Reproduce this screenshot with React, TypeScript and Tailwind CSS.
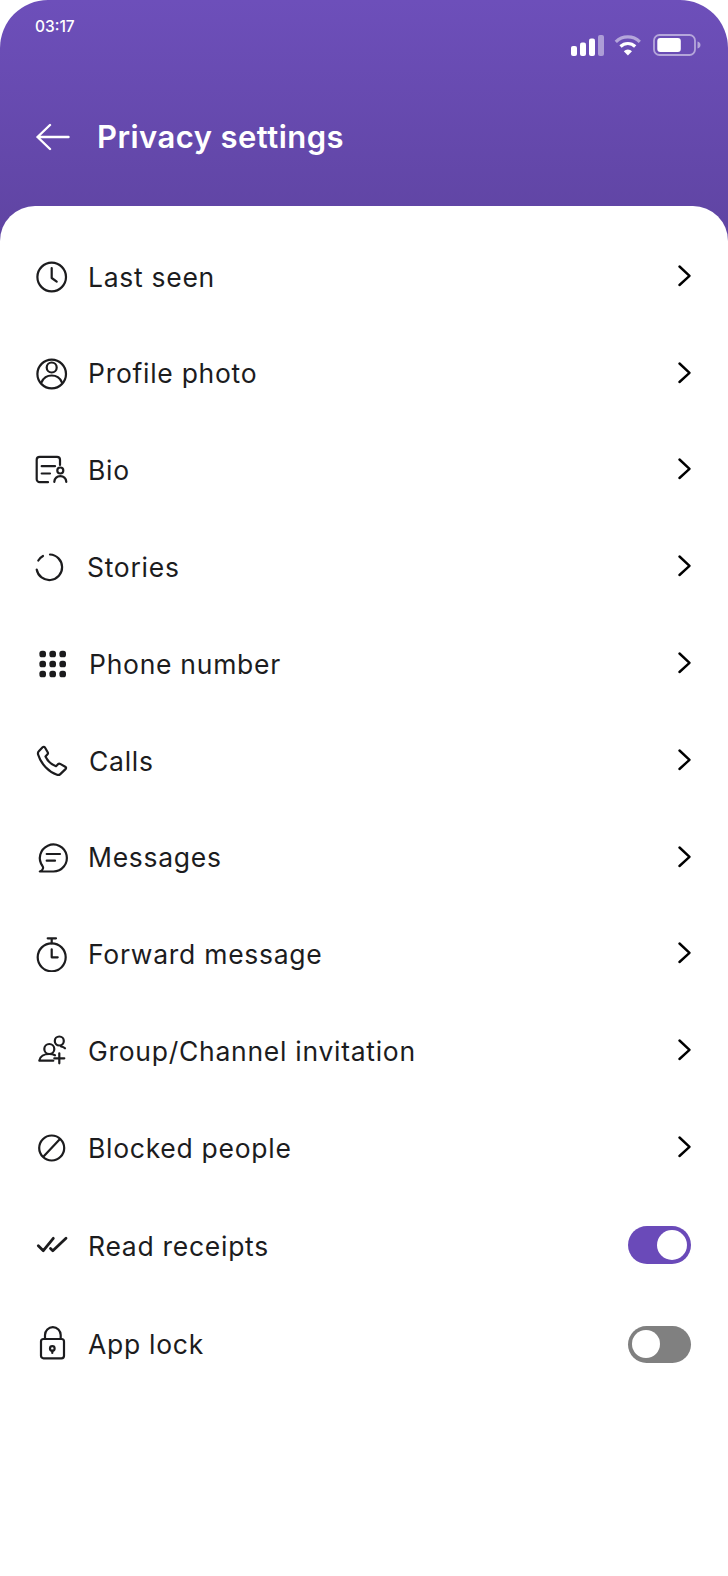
import React from "react";

const Svg = ({ children, className = "" }: { children: React.ReactNode; className?: string }) => (
  <svg width="36" height="36" viewBox="0 0 36 36" fill="none" stroke="#1c1c1e" strokeWidth="2.200" strokeLinecap="round" strokeLinejoin="round" className={"shrink-0 " + className}>
    {children}
  </svg>
);

const icons: Record<string, React.ReactNode> = {
  clock: (
    <Svg>
      <circle cx="17.7" cy="18" r="14.3" />
      <path d="M17.7 9v10l5 3.7" />
    </Svg>
  ),
  profile: (
    <Svg>
      <circle cx="17.7" cy="18" r="14.3" />
      <circle cx="17.7" cy="11.5" r="5" />
      <path d="M7.700 26c2-4.600 5.800-6.500 10-6.500s8 1.900 10 6.500" />
    </Svg>
  ),
  bio: (
    <Svg>
      <path d="M26 13V7.800a3 3 0 0 0-3-3H5.700a3 3 0 0 0-3 3v19.400a3 3 0 0 0 3 3H14" />
      <path d="M7.700 14.200H21M7.700 21.500H16" />
      <circle cx="26.300" cy="18.500" r="3" />
      <path d="M20.300 29.800c.5-3.600 3-5.600 6-5.600s5.500 2 6 5.600" />
    </Svg>
  ),
  stories: (
    <Svg>
      <path d="M16 5.500A12.800 12.800 0 1 1 2.700 20.500" />
      <path d="M4.300 11.500A12.800 12.800 0 0 1 9 7" />
    </Svg>
  ),
  dial: (
    <Svg>
      {[8.7, 18.7, 28.7].flatMap((x) =>
        [8, 18, 28].map((y) => <rect key={`${x}-${y}`} x={x - 3.3} y={y - 3.3} width="6.600" height="6.600" rx="2.600" fill="#1c1c1e" stroke="none" />)
      )}
    </Svg>
  ),
  phone: (
    <Svg>
      <path d="M8.600 4.300 4.800 8.300c-1 1-1.100 2-.6 3.500C7 21 15 29 23 31.800c1.500.4 2.500.1 3.300-.7l5.200-5c.9-.9.700-1.800-.3-2.400l-5-2.800c-.8-.4-1.500-.3-2.200.3l-2 2C17.500 21.500 13.500 18 11.500 13.500l2-2.200c.6-.6.600-1.300.2-2l-2.900-5c-.4-.6-1.600-.6-2.200 0z" />
    </Svg>
  ),
  message: (
    <Svg>
      <path d="M19.300 31.500A13.500 13.500 0 1 0 8.500 26c.7.800.8 1.500.5 2.500-.4 1.300-1.500 2.500-3.200 3h13.500z" />
      <path d="M12.700 14H26M12.700 20.700H21" />
    </Svg>
  ),
  timer: (
    <Svg>
      <circle cx="17.7" cy="21.300" r="14" />
      <path d="M13.700 2.300H22M17.700 2.300v5M17.700 13.300v8h6" />
    </Svg>
  ),
  group: (
    <Svg>
      <circle cx="15.300" cy="16" r="5" />
      <circle cx="25.300" cy="8" r="4.500" />
      <path d="M5.300 27.700c.6-4.500 5-6.700 10-6.700 2 0 4 .4 5.700 1.300M5.300 27.700h14" />
      <path d="M25.300 20.300v10M20.300 25.300h10" />
      <path d="M27 13.500c1.500.2 3 .8 4 1.800" />
    </Svg>
  ),
  blocked: (
    <Svg>
      <circle cx="17.700" cy="18" r="12.500" />
      <path d="M10 26 26 9" />
    </Svg>
  ),
  checks: (
    <Svg>
      <path d="m4.300 17.700 5 5 10-12.400M16.500 20.500l2.300 2.200L32 10.300" strokeWidth="2.800" />
    </Svg>
  ),
  lock: (
    <Svg>
      <rect x="7" y="13" width="23" height="19.300" rx="2.500" />
      <path d="M11 13V9a7.800 7.800 0 0 1 15.700 0v4" />
      <circle cx="18.300" cy="22.500" r="2.300" />
      <path d="M18.300 24.500v2.500" />
    </Svg>
  ),
};

const Chevron = () => (
  <svg width="13" height="22" viewBox="0 0 13 22" fill="none" stroke="#000" strokeWidth="2.400" strokeLinecap="round" strokeLinejoin="round" className="-mt-[2px]">
    <path d="M1.500 1.500 11.500 10.800 1.500 20" />
  </svg>
);

const rows: { icon: string; label: string; textClass?: string }[] = [
  { icon: "clock", label: "Last seen" },
  { icon: "profile", label: "Profile photo" },
  { icon: "bio", label: "Bio" },
  { icon: "stories", label: "Stories", textClass: "-ml-px" },
  { icon: "dial", label: "Phone number", textClass: "ml-px" },
  { icon: "phone", label: "Calls", textClass: "ml-px" },
  { icon: "message", label: "Messages" },
  { icon: "timer", label: "Forward message" },
  { icon: "group", label: "Group/Channel invitation" },
  { icon: "blocked", label: "Blocked people" },
];

const Label = ({ children, className = "" }: { children: React.ReactNode; className?: string }) => (
  <span className={"text-[26.5px] leading-none text-[#1c1c1e] tracking-[0.72px] " + className}>{children}</span>
);

export default function App() {
  return (
    <div className="w-[728px] h-[1576px] bg-white overflow-hidden font-['Inter',sans-serif]">
      <header className="h-[241px] rounded-t-[48px] bg-gradient-to-b from-[#6d4fba] to-[#5f44a2] text-white px-9">
        <div className="flex justify-between items-start">
          <span className="mt-[18px] -ml-px text-[15.5px] leading-[18px] font-medium">03:17</span>
          <div className="flex items-start mt-[34px] mr-[-9px] gap-[12px]">
            <svg width="33" height="22" viewBox="0 0 33 22" fill="#fff">
              <rect x="0" y="12" width="6" height="10" rx="2" />
              <rect x="9" y="8.500" width="6" height="13.500" rx="2" />
              <rect x="18" y="4.500" width="6" height="17.500" rx="2" />
              <rect x="27" y="1" width="6" height="21" rx="2" fillOpacity="0.45" />
            </svg>
            <svg width="28" height="22" viewBox="0 0 28 22" fill="none" stroke="#fff" strokeWidth="3.200" className="ml-[-2px] mr-[-1px]">
              <path d="M1.800 7.800a17 17 0 0 1 24 0" strokeOpacity="0.5" />
              <path d="M6.500 12.500a10.500 10.500 0 0 1 14.700 0" />
              <path d="M13.900 21.500 9.800 17.200a6 6 0 0 1 8.200 0z" fill="#fff" stroke="none" />
            </svg>
            <svg width="48" height="22" viewBox="0 0 48 22" fill="none">
              <rect x="1" y="1" width="41" height="20" rx="5.500" stroke="#fff" strokeOpacity="0.5" strokeWidth="1.800" />
              <rect x="4.300" y="4" width="23.500" height="14" rx="3" fill="#fff" />
              <path d="M44.500 7.500c1.800.4 3 1.800 3 3.500s-1.200 3.100-3 3.500z" fill="#fff" fillOpacity="0.5" />
            </svg>
          </div>
        </div>
        <div className="flex items-center mt-[63px] gap-[27px]">
          <svg width="34" height="28" viewBox="0 0 34 28" fill="none" stroke="#fff" strokeWidth="2.400" strokeLinecap="round" strokeLinejoin="round">
            <path d="M14 2 1.500 14 14 26M1.500 14H32.500" />
          </svg>
          <h1 className="text-[31px] leading-[36px] font-semibold tracking-[0.45px]">Privacy settings</h1>
        </div>
      </header>

      <main className="-mt-[35px] relative rounded-t-[35px] bg-white pt-[22.500px] pl-[34px] pr-[37px]">
        {rows.map((r) => (
          <div key={r.label} className="h-[96.800px] flex items-center justify-between">
            <div className="flex items-center gap-[18px]">
              {icons[r.icon]}
              <Label className={r.textClass}>{r.label}</Label>
            </div>
            <Chevron />
          </div>
        ))}
        <div className="h-[99px] flex items-center justify-between">
          <div className="flex items-center gap-[18px]">
            {icons.checks}
            <Label>Read receipts</Label>
          </div>
          <div className="w-[63px] h-[38px] -mt-[2px] rounded-full bg-[#6a4ab9] flex items-center justify-end pr-[4px]">
            <div className="w-[30px] h-[30px] rounded-full bg-white" />
          </div>
        </div>
        <div className="h-[98px] flex items-center justify-between">
          <div className="flex items-center gap-[18px]">
            {icons.lock}
            <Label>App lock</Label>
          </div>
          <div className="w-[63px] h-[37px] rounded-full bg-[#808080] flex items-center pl-[4px]">
            <div className="w-[28px] h-[28px] rounded-full bg-white" />
          </div>
        </div>
      </main>
    </div>
  );
}
